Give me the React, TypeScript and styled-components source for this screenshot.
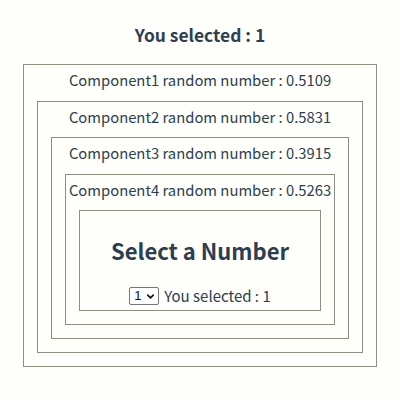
import React, { useState } from "react";
import styled, { createGlobalStyle } from "styled-components";
import { ChevronDown } from "lucide-react";

const GlobalStyle = createGlobalStyle`
  body {
    margin: 0;
    background: #fefefa;
    font-family: "Noto Sans CJK KR", "Noto Sans", sans-serif;
    color: #2c3e50;
  }
`;

const Page = styled.div`
  width: 400px;
  padding: 0 23px;
  box-sizing: border-box;
  text-align: center;
`;

const Heading = styled.h3`
  margin: 0;
  padding-top: 22px;
  height: 64px;
  box-sizing: border-box;
  font-size: 17.4px;
  line-height: 26px;
  font-weight: 700;
`;

const Box = styled.div`
  border: 1px solid #8e8e7e;
  padding: 0 13px 13px;
`;

const Title = styled.div`
  padding-top: 4px;
  margin: 0 -13px 9.5px;
  font-size: 14.8px;
  line-height: 22px;
  white-space: nowrap;
`;

const Picker = styled.div`
  border: 1px solid #8e8e7e;
  padding: 23px 0 3px;
`;

const PickerTitle = styled.h2`
  margin: 0 0 19px;
  font-size: 22px;
  line-height: 32px;
  font-weight: 700;
`;

const Row = styled.div`
  display: flex;
  justify-content: center;
  align-items: center;
  gap: 5px;
  font-size: 15px;
  line-height: 22px;
`;

const SelectWrap = styled.span`
  position: relative;
  display: inline-flex;
  width: 30px;
  height: 18px;
`;

const Select = styled.select`
  appearance: none;
  width: 100%;
  height: 100%;
  padding: 0 0 0 4px;
  font-size: 13px;
  line-height: 16px;
  font-family: "Liberation Sans", Arial, sans-serif;
  border: 1px solid #767676;
  border-radius: 2px;
  background: #fff;
  color: #111;
`;

const Caret = styled(ChevronDown)`
  position: absolute;
  right: 3px;
  top: 4px;
  pointer-events: none;
  color: #111;
`;

const numbers = ["0.5109", "0.5831", "0.3915", "0.5263"];

function Nest({ level, value, onChange }: { level: number; value: string; onChange: (v: string) => void }) {
  if (level >= numbers.length) {
    return (
      <Picker>
        <PickerTitle>Select a Number</PickerTitle>
        <Row>
          <SelectWrap>
            <Select value={value} onChange={(e) => onChange(e.target.value)}>
              {["1", "2", "3", "4", "5"].map((n) => (
                <option key={n} value={n}>
                  {n}
                </option>
              ))}
            </Select>
            <Caret size={11} strokeWidth={3.5} />
          </SelectWrap>
          <span>You selected : {value}</span>
        </Row>
      </Picker>
    );
  }
  return (
    <Box>
      <Title>
        Component{level + 1} random number : {numbers[level]}
      </Title>
      <Nest level={level + 1} value={value} onChange={onChange} />
    </Box>
  );
}

export default function App() {
  const [value, setValue] = useState("1");
  return (
    <>
      <GlobalStyle />
      <Page>
        <Heading>You selected : {value}</Heading>
        <Nest level={0} value={value} onChange={setValue} />
      </Page>
    </>
  );
}
